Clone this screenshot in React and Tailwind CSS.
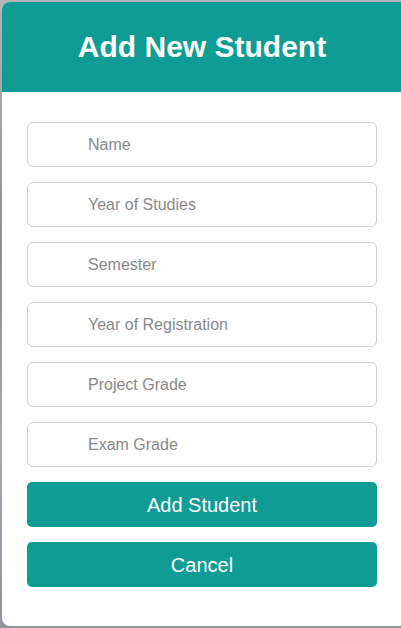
import React from "react";

const fields = [
  "Name",
  "Year of Studies",
  "Semester",
  "Year of Registration",
  "Project Grade",
  "Exam Grade",
];

export default function App() {
  return (
    <div
      className="w-[401px] h-[628px] overflow-hidden bg-[linear-gradient(180deg,#b5b5b5,#8f8f8f_40%,#a3a8b3_70%,#8e959c)] pt-[2px] pl-[2px]"
      style={{ fontFamily: '"Liberation Sans", Arial, sans-serif' }}
    >
      <div className="w-[412px] h-[624px] bg-white rounded-[8px] overflow-hidden">
        <div className="w-[400px] flex flex-col">
          <div className="h-[90px] shrink-0 bg-[#0e9c95] -mr-[12px] pr-[12px] flex items-center justify-center">
            <h1 className="text-white text-[30px] font-bold leading-none">Add New Student</h1>
          </div>
          <div className="flex flex-col px-[25px] pt-[30px]">
            {fields.map((f) => (
              <input
                key={f}
                placeholder={f}
                className="w-[350px] h-[45px] mb-[15px] border border-[#cfcfcf] rounded-[6px] pl-[60px] text-[16px] text-[#333] placeholder:text-[#888] outline-none bg-white"
              />
            ))}
            <button className="w-[350px] h-[45px] mb-[15px] bg-[#0e9c95] text-white text-[20px] rounded-[5px]">
              Add Student
            </button>
            <button className="w-[350px] h-[45px] bg-[#0e9c95] text-white text-[20px] rounded-[5px]">
              Cancel
            </button>
          </div>
        </div>
      </div>
    </div>
  );
}
